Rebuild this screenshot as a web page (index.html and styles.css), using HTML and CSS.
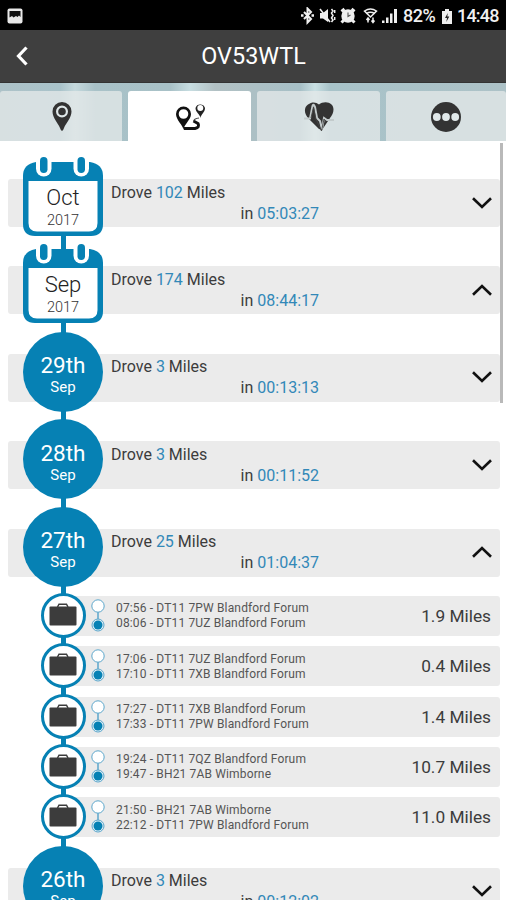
FILE: index.html
```html
<!DOCTYPE html>
<html lang="en">
<head>
    <meta charset="UTF-8">
    <meta name="viewport" content="width=device-width, initial-scale=1.0">
    <title>OV53WTL</title>
    <link rel="stylesheet" href="styles.css">
</head>
<body>
    <!-- shared icons -->
    <svg class="hidden">
        <symbol id="calendar" viewBox="0 0 80 80">
            <path fill="#0681b4" d="M13 5H67Q80 7 80 19V67Q80 79 68 79H12Q0 79 0 67V19Q0 7 13 5Z"/>
            <path fill="#fff" d="M5.500 24H74.500V66Q74.500 74.500 66 74.500H14Q5.500 74.500 5.500 66Z"/>
            <rect x="13" y="-4" width="15.500" height="23.500" rx="7.700" fill="#fff"/>
            <rect x="50.500" y="-4" width="15.500" height="23.500" rx="7.700" fill="#fff"/>
            <rect x="17" y="0" width="7.500" height="16" rx="3.700" fill="#0681b4"/>
            <rect x="54.500" y="0" width="7.500" height="16" rx="3.700" fill="#0681b4"/>
        </symbol>
        <symbol id="case" viewBox="0 0 28 23">
            <path d="M8.500 4L10 1.200H17.500L19 4" fill="none" stroke="#3c3c3c" stroke-width="1.500"/>
            <rect x="0.500" y="3.500" width="27" height="19" rx="1" fill="#3c3c3c"/>
        </symbol>
        <symbol id="stops" viewBox="0 0 14 34">
            <path d="M7 13V22" stroke="#5ba6cb" stroke-width="1.500"/>
            <circle cx="7" cy="7" r="6.200" fill="#fff" stroke="#5ba6cb"/>
            <circle cx="7" cy="26" r="6" fill="#e3f0f6" stroke="#5ba6cb"/>
            <circle cx="7" cy="26" r="4.500" fill="#0681b4"/>
        </symbol>
        <symbol id="down" viewBox="0 0 20 12">
            <path d="M1 1.200L10 10L19 1.200" fill="none" stroke="#111" stroke-width="2.600"/>
        </symbol>
        <symbol id="up" viewBox="0 0 20 12">
            <path d="M1 10.800L10 2L19 10.800" fill="none" stroke="#111" stroke-width="2.600"/>
        </symbol>
    </svg>

    <div class="status-bar">
        <svg class="picture" width="16" height="16" viewBox="0 0 16 16">
            <rect x="0.500" y="0.500" width="15" height="15" rx="2" fill="#e8e8e8"/>
            <path d="M2.500 3H13.500V9L12 7.500L10.500 9L9 8L6.500 9.500L5 8L2.500 9.500Z" fill="#111"/>
        </svg>
        <svg width="98" height="18" viewBox="0 0 98 18" fill="#f0f0f0" stroke="#f0f0f0">
            <path d="M4 5L11 12L7.500 15.500V1.500L11 5L4 12" fill="none" stroke-width="2"/>
            <path d="M1 8.500H3.500M11.500 8.500H14" stroke-width="2.500"/>
            <path d="M20 6H23L28 2V15L23 11.500H20Z" stroke="none"/>
            <path d="M20 2L30 15" stroke-width="1.600"/>
            <path d="M31.500 2L33 4L31.500 6L33 8.500L31.500 11L33 13L31.500 15M34.700 3V6M34.700 10V13" fill="none" stroke-width="1.500"/>
            <circle cx="48" cy="9" r="6.700" stroke="none"/>
            <path d="M41.500 4.500L44.500 2M54.500 4.500L51.500 2M44 13L41.500 15.500M52 13L54.500 15.500" stroke-width="3"/>
            <path d="M48 5.500V9.500L50.500 8" fill="none" stroke="#555" stroke-width="1.100"/>
            <path d="M64.500 4Q70.500 0 76.500 4L70.500 10Z" fill="none" stroke-width="1.500"/>
            <path d="M66.500 6.500Q70.500 4 74.500 6.500" fill="none" stroke-width="1.600"/>
            <path d="M68 11V15.500M73 10.500V15M66.500 13L68 11L69.500 13M71.500 13.500L73 15.500L74.500 13.500" fill="none" stroke-width="1.500"/>
            <path d="M82 16V13.500H84.500V16ZM86 16V10.500H88.500V16ZM90 16V6.500H92.500V16ZM94 16V2H97V16Z" stroke="none"/>
        </svg>
        <span class="battery-level">82%</span>
        <svg class="battery" width="10" height="15" viewBox="0 0 10 15">
            <path d="M3 0H7V2H10V15H0V2H3Z" fill="#eee"/>
            <path d="M5.800 4L3 9H5L4.300 13L7.300 7.500H5.300Z" fill="#222"/>
        </svg>
        <span class="clock">14:48</span>
    </div>

    <div class="header">
        <svg class="back" width="14" height="20" viewBox="0 0 14 20">
            <path d="M11.500 1.500L3.500 10L11.500 18.500" fill="none" stroke="#fff" stroke-width="3.200"/>
        </svg>
        <h1>OV53WTL</h1>
    </div>

    <div class="tabs">
        <div class="tab first">
            <svg width="20" height="30" viewBox="0 0 20 30">
                <path d="M10 29Q9 29 8 26C6 21 0.500 16 0.500 9.500A9.500 9.500 0 0 1 19.500 9.500C19.500 16 14 21 12 26Q11 29 10 29Z" fill="#333"/>
                <circle cx="10" cy="9.500" r="4.900" fill="none" stroke="#dfe7e8" stroke-width="2.200"/>
            </svg>
        </div>
        <div class="tab active">
            <svg width="30" height="30" viewBox="0 0 30 30">
                <path fill="#111" fill-rule="evenodd" d="M8.500 28C8 23 1 18 1 12A7.500 7.500 0 0 1 16 12C16 18 9 22 8.500 28ZM8.500 7.200A4.800 4.800 0 1 0 8.500 16.800A4.800 4.800 0 1 0 8.500 7.200Z"/>
                <path fill="#222" fill-rule="evenodd" d="M25.500 16C25 12 20.500 10.500 20.500 6A5 5 0 0 1 30 6C30 10.500 26 12 25.500 16ZM25.300 3A3 3 0 1 0 25.300 9A3 3 0 1 0 25.300 3Z"/>
                <path d="M9 26.500H20Q25 25.500 23 21.500L18.500 19" fill="none" stroke="#111" stroke-width="3"/>
                <path d="M18.500 19.500Q19 16.500 24 16" fill="none" stroke="#444" stroke-width="1.200"/>
            </svg>
        </div>
        <div class="tab">
            <svg width="30" height="30" viewBox="0 0 30 30">
                <path fill="#333" d="M15 2.500C18 0 24 -1 27.500 2.500C31 6 29.500 12 26 16L18 28L15 27L5 17C0 12 -0.500 5.500 4 2.500C8 -0.500 12 0 15 2.500Z"/>
                <path d="M0 16.500H6L8.500 4Q9.500 1 11 5L13 16L16 19L18 27L20 16L23 18H30" fill="none" stroke="#c3cbcc" stroke-width="2"/>
                <path d="M7 16L9.500 5L12 17L17.500 29L20 17L22 20" fill="none" stroke="#444" stroke-width="0.900"/>
            </svg>
        </div>
        <div class="tab">
            <svg width="30" height="30" viewBox="0 0 30 30">
                <circle cx="15" cy="15" r="15" fill="#333"/>
                <g fill="#e0e8e9">
                    <circle cx="5.800" cy="15" r="3.900"/>
                    <circle cx="15" cy="15" r="3.900"/>
                    <circle cx="24.200" cy="15" r="3.900"/>
                </g>
            </svg>
        </div>
    </div>

    <div class="timeline">
        <div class="entry">
            <div class="bar">
                <div class="summary"><p>Drove <b>102</b> Miles</p><p class="time">in <b>05:03:27</b></p></div>
                <svg class="arrow"><use href="#down"/></svg>
            </div>
            <div class="marker month">
                <svg><use href="#calendar"/></svg>
                <div class="label"><span>Oct</span><small>2017</small></div>
            </div>
        </div>
        <div class="entry">
            <div class="bar">
                <div class="summary"><p>Drove <b>174</b> Miles</p><p class="time">in <b>08:44:17</b></p></div>
                <svg class="arrow"><use href="#up"/></svg>
            </div>
            <div class="marker month">
                <svg><use href="#calendar"/></svg>
                <div class="label"><span>Sep</span><small>2017</small></div>
            </div>
        </div>
        <div class="entry">
            <div class="bar">
                <div class="summary"><p>Drove <b>3</b> Miles</p><p class="time">in <b>00:13:13</b></p></div>
                <svg class="arrow"><use href="#down"/></svg>
            </div>
            <div class="marker day"><span>29th</span><small>Sep</small></div>
        </div>
        <div class="entry">
            <div class="bar">
                <div class="summary"><p>Drove <b>3</b> Miles</p><p class="time">in <b>00:11:52</b></p></div>
                <svg class="arrow"><use href="#down"/></svg>
            </div>
            <div class="marker day"><span>28th</span><small>Sep</small></div>
        </div>
        <div class="entry">
            <div class="bar">
                <div class="summary"><p>Drove <b>25</b> Miles</p><p class="time">in <b>01:04:37</b></p></div>
                <svg class="arrow"><use href="#up"/></svg>
            </div>
            <div class="marker day"><span>27th</span><small>Sep</small></div>
        </div>

        <div class="trips">
            <div class="trip">
                <div class="case"><svg><use href="#case"/></svg></div>
                <div class="trip-bar">
                    <svg class="stops"><use href="#stops"/></svg>
                    <div class="route"><p>07:56 - DT11 7PW Blandford Forum</p><p>08:06 - DT11 7UZ Blandford Forum</p></div>
                    <div class="miles">1.9 Miles</div>
                </div>
            </div>
            <div class="trip">
                <div class="case"><svg><use href="#case"/></svg></div>
                <div class="trip-bar">
                    <svg class="stops"><use href="#stops"/></svg>
                    <div class="route"><p>17:06 - DT11 7UZ Blandford Forum</p><p>17:10 - DT11 7XB Blandford Forum</p></div>
                    <div class="miles">0.4 Miles</div>
                </div>
            </div>
            <div class="trip">
                <div class="case"><svg><use href="#case"/></svg></div>
                <div class="trip-bar">
                    <svg class="stops"><use href="#stops"/></svg>
                    <div class="route"><p>17:27 - DT11 7XB Blandford Forum</p><p>17:33 - DT11 7PW Blandford Forum</p></div>
                    <div class="miles">1.4 Miles</div>
                </div>
            </div>
            <div class="trip">
                <div class="case"><svg><use href="#case"/></svg></div>
                <div class="trip-bar">
                    <svg class="stops"><use href="#stops"/></svg>
                    <div class="route"><p>19:24 - DT11 7QZ Blandford Forum</p><p>19:47 - BH21 7AB Wimborne</p></div>
                    <div class="miles">10.7 Miles</div>
                </div>
            </div>
            <div class="trip">
                <div class="case"><svg><use href="#case"/></svg></div>
                <div class="trip-bar">
                    <svg class="stops"><use href="#stops"/></svg>
                    <div class="route"><p>21:50 - BH21 7AB Wimborne</p><p>22:12 - DT11 7PW Blandford Forum</p></div>
                    <div class="miles">11.0 Miles</div>
                </div>
            </div>
        </div>

        <div class="entry">
            <div class="bar">
                <div class="summary"><p>Drove <b>3</b> Miles</p><p class="time">in <b>00:12:02</b></p></div>
                <svg class="arrow"><use href="#down"/></svg>
            </div>
            <div class="marker day"><span>26th</span><small>Sep</small></div>
        </div>
        <div class="scrollbar"></div>
    </div>
</body>
</html>
```
FILE: styles.css
```css
* {
    margin: 0;
    padding: 0;
    box-sizing: border-box;
    font-family: Roboto, sans-serif;
}

body {
    width: 506px;
    height: 900px;
    overflow: hidden;
    display: flex;
    flex-direction: column;
    background-color: #fff;
}

svg {
    display: block;
    flex-shrink: 0;
}

.hidden {
    position: absolute;
    width: 0;
    height: 0;
}

.status-bar {
    height: 30px;
    flex-shrink: 0;
    display: flex;
    align-items: center;
    padding: 2px 7px 0 7px;
    background-color: #000;
    color: #f0f0f0;
    font-size: 18px;
    font-weight: 500;
    line-height: 28px;
}

.picture {
    margin-right: auto;
}

.battery-level {
    width: 34px;
    margin-left: 5px;
    letter-spacing: -0.5px;
    white-space: nowrap;
}

.battery {
    margin-left: 5px;
}

.clock {
    width: 42px;
    margin-left: 5px;
    letter-spacing: -0.8px;
    white-space: nowrap;
}

.header {
    height: 53px;
    flex-shrink: 0;
    display: grid;
    grid-template-columns: 60px 1fr 60px;
    align-items: center;
    background-color: #3f3f3f;
    border-bottom: 1px solid #333;
    color: #fff;
}

.back {
    margin-left: 15px;
}

h1 {
    font-size: 23.4px;
    font-weight: 400;
    text-align: center;
    padding-left: 1px;
}

.tabs {
    height: 58px;
    flex-shrink: 0;
    display: grid;
    grid-template-columns: 122px 123px 123px 120px;
    gap: 6px;
    padding-top: 8px;
    background: linear-gradient(90deg, #adc2c8 0, #a9c3ca 60px, #c5d9dd 75px, #a9c2c8 95px, #a8c1c7 170px, #c7dde1 190px, #b2c1c4 215px, #a6bfc6 300px, #c9e0e3 315px, #a8c3c9 330px, #adc2c7 100%);
}

.tab {
    display: flex;
    justify-content: center;
    padding-top: 11px;
    border-radius: 3px 3px 0 0;
    background-color: rgba(230, 234, 233, 0.75);
}

.tab.first {
    padding-left: 2px;
}

.tab.active {
    background-color: #fff;
}

.timeline {
    position: relative;
    flex: 1;
    padding: 16px 6px 0 8px;
    background: linear-gradient(#0681b4, #0681b4) 61px 40px / 5px 100% no-repeat;
}

.entry {
    display: grid;
    height: 87.4px;
}

.bar {
    grid-area: 1 / 1;
    display: flex;
    justify-content: space-between;
    height: 48px;
    margin-top: 22px;
    padding-left: 103px;
    padding-right: 8px;
    border-radius: 3px;
    background-color: #ebebeb;
}

.summary {
    width: 212px;
    padding-top: 2.5px;
    font-size: 16px;
    line-height: 21px;
    color: #3c3c3c;
}

.summary b {
    font-weight: 400;
    color: #3288b8;
}

.time {
    text-align: right;
    padding-right: 4px;
}

.arrow {
    width: 20px;
    height: 12px;
    margin-top: 17.5px;
}

.marker {
    grid-area: 1 / 1;
    width: 80px;
    height: 80px;
    margin-left: 15px;
}

.month {
    display: grid;
}

.month svg {
    grid-area: 1 / 1;
    width: 80px;
    height: 80px;
}

.label {
    grid-area: 1 / 1;
    display: flex;
    flex-direction: column;
    align-items: center;
    padding-top: 28px;
    color: #222;
}

.label span {
    font-size: 22px;
    font-weight: 300;
    line-height: 26px;
}

.label small {
    font-size: 14.5px;
    font-weight: 300;
    line-height: 20px;
    color: #333;
}

.day {
    display: flex;
    flex-direction: column;
    align-items: center;
    padding-top: 20.5px;
    border-radius: 50%;
    background-color: #0681b4;
    color: #fff;
}

.day span {
    font-size: 22.5px;
    line-height: 26px;
}

.day small {
    font-size: 15px;
    line-height: 18px;
}

.trip {
    display: grid;
    height: 50.3px;
}

.trip-bar {
    grid-area: 1 / 1;
    display: flex;
    align-items: center;
    height: 40px;
    margin-top: 2px;
    margin-left: 56px;
    padding-left: 27px;
    padding-right: 9px;
    border-radius: 3px;
    background-color: #ebebeb;
}

.case {
    grid-area: 1 / 1;
    z-index: 1;
    display: flex;
    justify-content: center;
    width: 45px;
    height: 45px;
    margin-top: -1px;
    margin-left: 32.5px;
    padding-top: 7px;
    border: 3px solid #0681b4;
    border-radius: 50%;
    background-color: #fff;
}

.case svg {
    width: 28px;
    height: 23px;
}

.stops {
    width: 14px;
    height: 34px;
}

.route {
    flex: 1;
    padding-left: 11px;
    padding-top: 1px;
    font-size: 12px;
    letter-spacing: 0.15px;
    line-height: 15px;
    color: #555;
}

.miles {
    font-size: 17.3px;
    color: #3c3c3c;
}

.trips {
    height: 252px;
}

.scrollbar {
    position: absolute;
    top: 2px;
    right: 3px;
    width: 3px;
    height: 260px;
    background-color: #b9b9b9;
}
```
